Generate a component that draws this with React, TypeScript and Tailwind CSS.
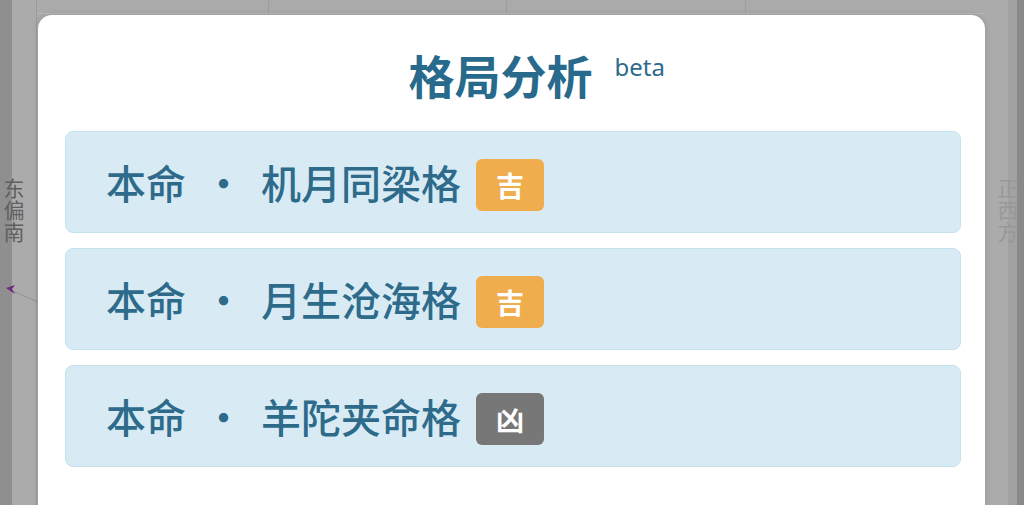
import React from "react";

const CJK = { fontFamily: '"Noto Sans CJK SC", "Noto Sans", sans-serif' };

type Item = { name: string; tag: string; good: boolean };

const items: Item[] = [
  { name: "机月同梁格", tag: "吉", good: true },
  { name: "月生沧海格", tag: "吉", good: true },
  { name: "羊陀夹命格", tag: "凶", good: false },
];

function Card({ item }: { item: Item }) {
  return (
    <div className="flex h-[102px] items-center rounded-[8px] border border-[#c4e3ef] bg-[#d8ebf5] pl-[40px]">
      <span className="text-[40px] font-medium leading-none text-[#2e6b8b]">本命</span>
      <span className="inline-block w-[75px] text-center text-[40px] font-medium leading-none text-[#2e6b8b]">·</span>
      <span className="text-[40px] font-medium leading-none text-[#2e6b8b]">{item.name}</span>
      <span
        className={
          "ml-[15px] mt-[5px] flex h-[52px] w-[68px] items-center justify-center rounded-[6px] text-[28px] font-bold leading-none text-white " +
          (item.good ? "bg-[#f0ad4e]" : "bg-[#777777]")
        }
      >
        {item.tag}
      </span>
    </div>
  );
}

export default function App() {
  return (
    <div className="relative h-[505px] w-[1024px] overflow-hidden bg-[#aaaaaa]" style={CJK}>
      {/* dimmed page behind */}
      <div className="flex h-full w-full">
        <div className="h-full w-[12px] bg-[#8f8f8f]" />
        <div className="relative h-full w-[25px] border-r border-[#9c9c9c] bg-[#ababab]">
          <div className="absolute left-[-9px] top-[178px] text-[21px] leading-[22px] tracking-[1px] text-[#5f5f5f] [writing-mode:vertical-rl]">
            东偏南
          </div>
        </div>
        <div className="flex h-full flex-1 flex-col">
          <div className="flex h-[14px] border-b border-[#b8b8b8]">
            <div className="w-[232px] border-r border-[#9d9d9d]" />
            <div className="w-[238px] border-r border-[#9d9d9d]" />
            <div className="w-[239px] border-r border-[#9d9d9d]" />
            <div className="flex-1" />
          </div>
          <div className="flex-1" />
        </div>
        <div className="relative h-full w-[23px] bg-[#ababab]">
          <div className="absolute left-[12px] top-[178px] text-[21px] leading-[22px] tracking-[1px] text-[#989898] [writing-mode:vertical-rl]">
            正西方
          </div>
        </div>
        <div className="h-full w-[9px] bg-[#a2a2a2]" />
        <div className="h-full w-[7px] bg-[#8a8a8a]" />
      </div>

      {/* arrow on left */}
      <svg className="absolute left-[2px] top-[280px]" width="40" height="26" viewBox="0 0 40 26">
        <line x1="6" y1="9" x2="36" y2="22" stroke="#9a8aa0" strokeWidth="1" />
        <path d="M4 8 L13 5 L10 9 L13 14 Z" fill="#6b2a7a" />
      </svg>

      {/* modal */}
      <div className="absolute left-[38px] right-[39px] top-[15px] h-[520px] rounded-[14px] bg-white shadow-[0_0_6px_rgba(0,0,0,0.12)]">
        <div className="flex justify-center pr-[22px] pt-[34px]">
          <div className="relative">
            <h2 className="text-[46px] font-bold leading-[50px] text-[#286a8c]">格局分析</h2>
            <span
              className="absolute left-full top-[6px] ml-[22px] text-[24px] leading-[24px] text-[#2e6b8b]"
              style={{ fontFamily: '"Noto Sans", sans-serif' }}
            >
              beta
            </span>
          </div>
        </div>
        <div className="mt-[32px] flex flex-col gap-[15px] pl-[27px] pr-[24px]">
          {items.map((it) => (
            <Card key={it.name} item={it} />
          ))}
        </div>
      </div>
    </div>
  );
}
